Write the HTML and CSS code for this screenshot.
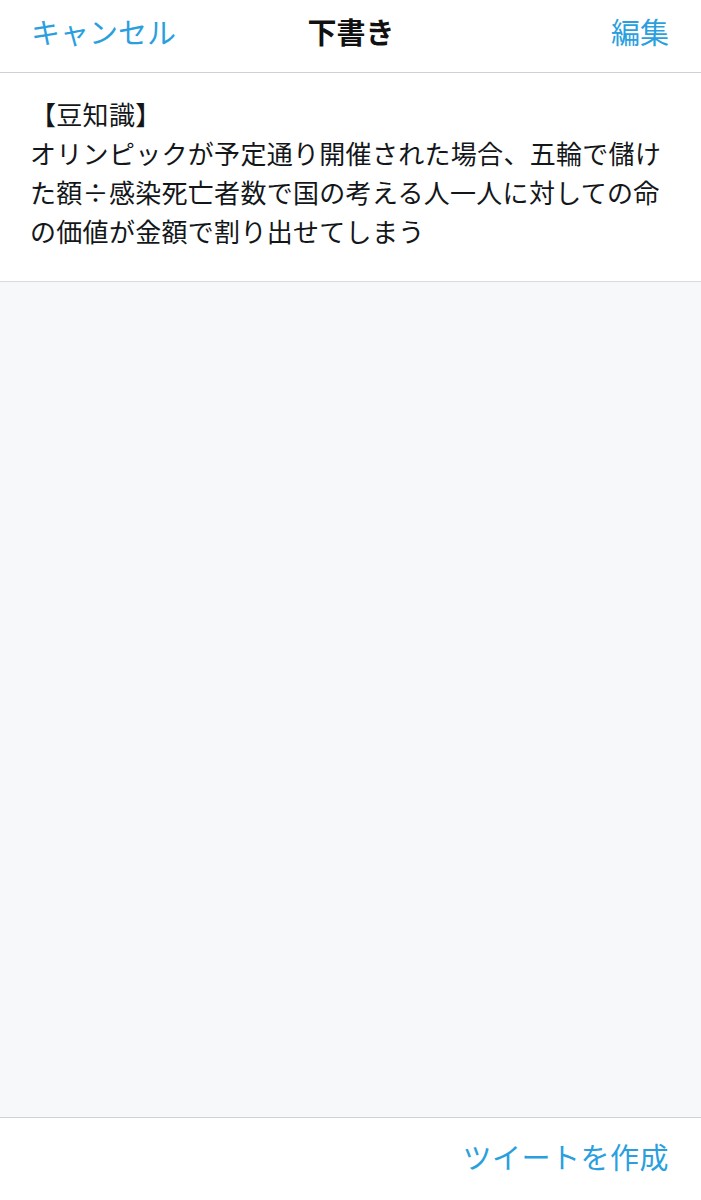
FILE: index.html
```html
<!DOCTYPE html>
<html lang="ja">
  <head>
    <meta charset="UTF-8" />
    <meta name="viewport" content="width=device-width, initial-scale=1.0" />
    <title>下書き</title>
    <link rel="stylesheet" href="styles.css">
  </head>
  <body>
    <div id="page">
      <div class="nav">
        <span class="nav-btn nav-left">キャンセル</span>
        <span class="nav-title">下書き</span>
        <span class="nav-btn nav-right">編集</span>
      </div>
      <div class="draft">
        <p>【豆知識】<br />オリンピックが予定通り開催された場合、五輪で儲けた額÷感染死亡者数で国の考える人一人に対しての命の価値が金額で割り出せてしまう</p>
      </div>
      <div class="empty"></div>
      <div class="footer">
        <span class="nav-btn">ツイートを作成</span>
      </div>
    </div>
  </body>
</html>
```

FILE: styles.css
```css
html,
body {
  margin: 0;
  padding: 0;
}
body {
  font-family: "Noto Sans CJK JP", "Noto Sans", sans-serif;
  background-color: #fff;
}
#page {
  display: flex;
  flex-direction: column;
  height: 1200px;
}
.nav {
  display: grid;
  grid-template-columns: 1fr auto 1fr;
  align-items: center;
  height: 72px;
  padding: 0 32px 0 31px;
  border-bottom: 1px solid #cdd0d6;
}
.nav span {
  font-size: 29px;
  line-height: 1;
  margin-top: -10px;
}
.nav-left {
  justify-self: start;
}
.nav-right {
  justify-self: end;
}
.nav-btn {
  color: #2b9fde;
  font-size: 29px;
}
.nav-title {
  font-weight: bold;
  color: #111;
  margin-left: 2px;
}
.draft {
  padding: 21px 30px 31px 30px;
  border-bottom: 1px solid #d8dadd;
}
.draft p {
  margin: 0;
  font-size: 26px;
  line-height: 39px;
  letter-spacing: 0.3px;
  color: #14171a;
}
.empty {
  flex: 1;
  background-color: #f6f8fa;
  border-bottom: 1px solid #cfd1d4;
}
.footer {
  display: flex;
  justify-content: flex-end;
  align-items: center;
  height: 82px;
  padding: 0 32px;
}
.footer span {
  line-height: 1;
  margin-top: -6px;
  letter-spacing: 0.5px;
}
```
